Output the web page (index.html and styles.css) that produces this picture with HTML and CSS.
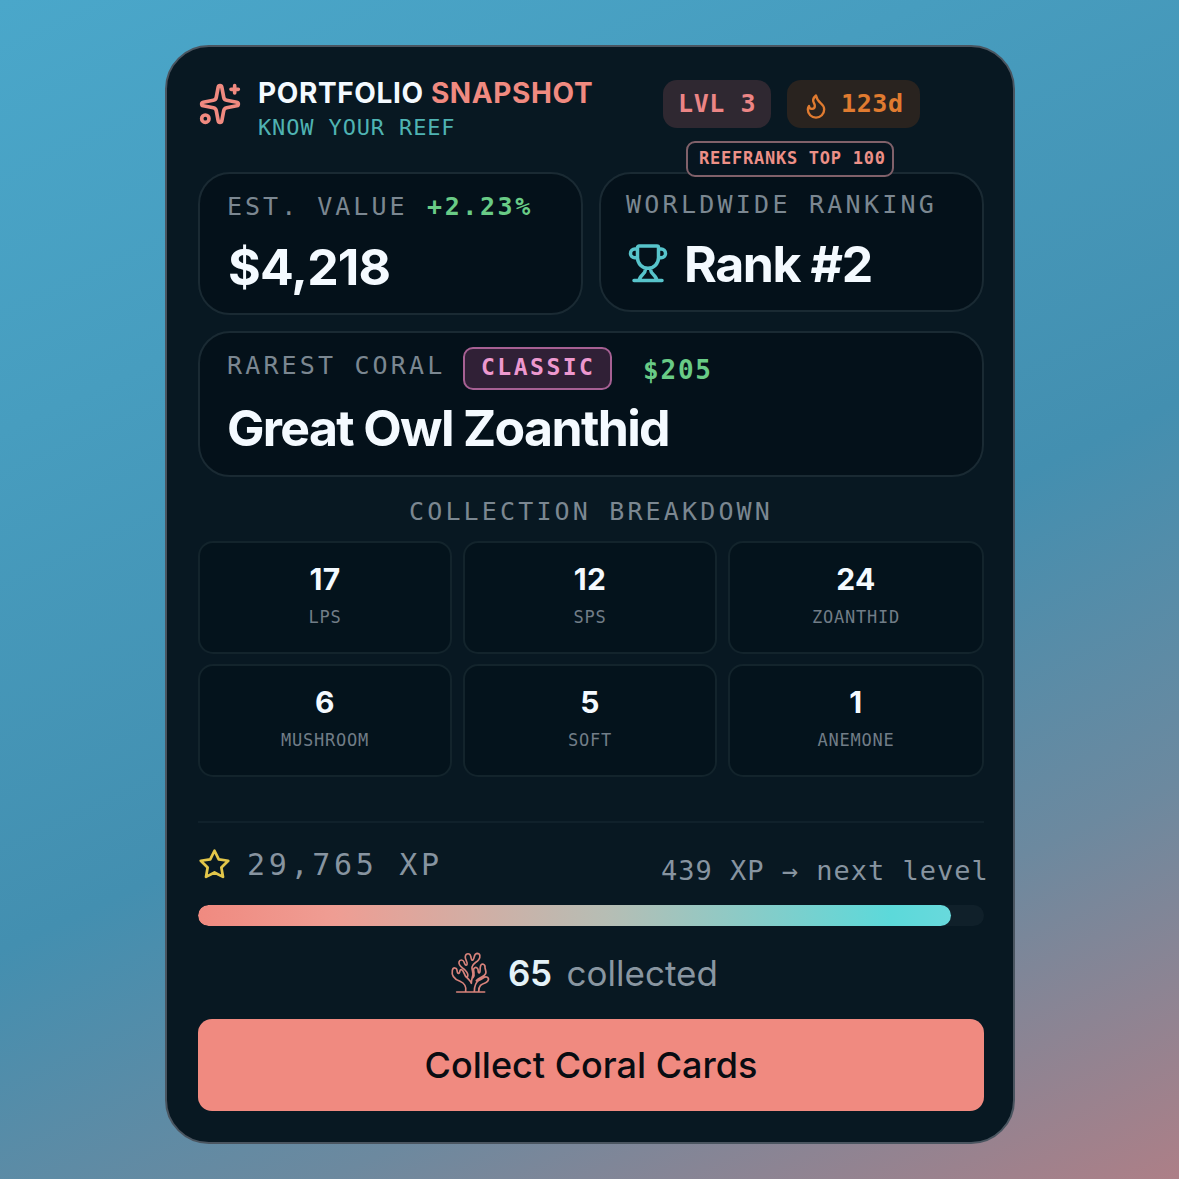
FILE: index.html
```html
<!DOCTYPE html>
<html lang="en">
<head>
<meta charset="utf-8">
<title>Portfolio Snapshot</title>
<link rel="stylesheet" href="styles.css">
</head>
<body>
<main class="card">
  <header class="header">
    <svg class="sparkles" viewBox="0 0 24 24"><path d="M11.017 2.814a1 1 0 0 1 1.966 0l1.051 5.558a2 2 0 0 0 1.594 1.594l5.558 1.051a1 1 0 0 1 0 1.966l-5.558 1.051a2 2 0 0 0-1.594 1.594l-1.051 5.558a1 1 0 0 1-1.966 0l-1.051-5.558a2 2 0 0 0-1.594-1.594l-5.558-1.051a1 1 0 0 1 0-1.966l5.558-1.051a2 2 0 0 0 1.594-1.594z"/><path d="M20 2v4M22 4h-4"/><circle cx="4" cy="20" r="2"/></svg>
    <div class="heading">
      <h1 class="title">PORTFOLIO <span class="accent">SNAPSHOT</span></h1>
      <p class="mono tagline">KNOW YOUR REEF</p>
    </div>
    <div class="badges">
      <span class="mono pill level">LVL 3</span>
      <span class="mono pill streak"><svg class="flame" viewBox="0 0 24 24"><path d="M8.500 14.500A2.500 2.500 0 0 0 11 12c0-1.380-.5-2-1-3-1.072-2.143-.224-4.054 2-6 .5 2.500 2 4.900 4 6.500 2 1.600 3 3.500 3 5.500a7 7 0 1 1-14 0c0-1.153.433-2.294 1-3a2.500 2.500 0 0 0 2.500 2.500z"/></svg><span>123d</span></span>
    </div>
  </header>

  <section class="stats">
    <article class="panel value">
      <div class="label-row"><span class="mono label est">EST. VALUE</span><span class="mono gain">+2.23%</span></div>
      <strong class="big price">$4,218</strong>
    </article>
    <article class="panel ranking">
      <span class="mono top-badge">REEFRANKS TOP 100</span>
      <span class="mono label world">WORLDWIDE RANKING</span>
      <div class="rank-row">
        <svg class="trophy" viewBox="0 0 24 24"><path d="M6 9H4.500a2.500 2.500 0 0 1 0-5H6M18 9h1.500a2.500 2.500 0 0 0 0-5H18M4 22h16M6 3.200v5.800a6 6 0 0 0 12 0V3.200a.9.9 0 0 0-.9-.9H6.900a.9.9 0 0 0-.9.9zM10.500 15v.8c0 2.600-3.500 3.200-3.500 6.200M13.500 15v.8c0 2.600 3.500 3.200 3.500 6.200"/></svg>
        <strong class="big rank">Rank #2</strong>
      </div>
    </article>
  </section>

  <section class="panel rarest">
    <div class="rarest-row"><span class="mono label rare">RAREST CORAL</span><span class="mono classic">CLASSIC</span><span class="mono rare-price">$205</span></div>
    <strong class="big coral-name">Great Owl Zoanthid</strong>
  </section>

  <h2 class="mono breakdown">COLLECTION BREAKDOWN</h2>
  <section class="grid">
    <div class="cell"><b>17</b><span class="mono">LPS</span></div>
    <div class="cell"><b>12</b><span class="mono">SPS</span></div>
    <div class="cell"><b>24</b><span class="mono">ZOANTHID</span></div>
    <div class="cell"><b>6</b><span class="mono">MUSHROOM</span></div>
    <div class="cell"><b>5</b><span class="mono">SOFT</span></div>
    <div class="cell"><b>1</b><span class="mono">ANEMONE</span></div>
  </section>

  <section class="progress">
    <div class="xp-row">
      <svg class="star" viewBox="0 0 24 24"><path d="M12 2l3.090 6.260L22 9.270l-5 4.870 1.180 6.880L12 17.770l-6.180 3.250L7 14.140 2 9.270l6.910-1.010z"/></svg>
      <span class="mono xp">29,765 XP</span>
      <span class="mono next">439 XP → next level</span>
    </div>
    <div class="track"><div class="fill" style="width: 95.8%"></div></div>
  </section>

  <div class="collected">
    <svg class="coral" viewBox="0 0 150 165"><path d="M35 141H119M62 140C65 122 58 115 45 109C29 103 19 91 22 76C24 66 35 67 36 76C37 82 38 87 42 85C46 82 43 72 50 74C58 77 56 92 66 98C72 91 68 83 60 75C50 66 40 62 42 51C44 43 54 43 57 51C59 57 62 63 66 59C70 53 58 43 61 33C63 24 75 24 77 33C79 40 79 48 84 45C89 40 86 26 96 25C106 25 107 36 101 44C94 53 82 56 81 66C80 76 86 82 83 93C81 101 79 107 79 115M88 140C88 121 91 113 101 106C115 103 115 94 125 96C134 99 131 109 122 113C109 118 101 121 101 140M66 98C72 104 77 109 79 115M84 98C90 91 87 85 86 77C84 68 93 64 98 71C101 76 98 83 102 84C108 83 103 72 107 62C110 53 121 58 120 67C120 75 125 77 122 86C118 95 103 97 94 107"/></svg>
    <b class="count">65</b><span class="collected-label">collected</span>
  </div>
  <button class="cta">Collect Coral Cards</button>
</main>
</body>
</html>
```
FILE: styles.css
```css
* { box-sizing: border-box; }
body {
  margin: 0;
  height: 1179px;
  overflow: hidden;
  padding: 45px 164px 0 165px;
  font-family: Inter, sans-serif;
  background: linear-gradient(155deg, #4aa7ca 0%, #479dbf 25%, #438fb0 55%, #6c899f 77%, #ad7f87 100%);
}
h1, h2, p { margin: 0; }
svg { fill: none; stroke: currentColor; stroke-width: 2; stroke-linecap: round; stroke-linejoin: round; flex: none; }
.mono { font-family: "DejaVu Sans Mono", monospace; white-space: pre; }
.card {
  display: flex;
  flex-direction: column;
  height: 1099px;
  padding: 0 29px 0 31px;
  border: 2px solid #4a5560;
  border-radius: 44px;
  background: #081822;
  color: #f4faff;
}
.header { display: flex; height: 125px; }
.sparkles { width: 44px; height: 44px; margin: 35px 16px 0 0; color: #f08a80; }
.heading { width: 405px; padding-top: 29px; }
.title { font-size: 28px; line-height: 34px; font-weight: 650; letter-spacing: .62px; white-space: nowrap; }
.accent { color: #f08a80; }
.tagline { color: #4fb3b3; font-size: 22px; line-height: 28px; margin-top: 4px; letter-spacing: .86px; }
.badges { display: flex; gap: 16px; padding-top: 33px; }
.pill { display: flex; align-items: center; height: 48px; border-radius: 14px; font-size: 25px; font-weight: 700; letter-spacing: .6px; padding-bottom: 1px; }
.level { width: 108px; padding-left: 15px; color: #ec8585; background: #2f2831; }
.streak { width: 133px; padding-left: 15px; gap: 11px; color: #e07b30; background: #29231f; }
.flame { width: 28px; height: 28px; margin-top: 4px; }
.stats { display: grid; grid-template-columns: 385px 385px; gap: 16px; height: 159px; align-items: start; }
.panel { border: 2px solid #1a2a33; border-radius: 32px; background: #04111a; }
.value { height: 143px; padding: 17px 28px; }
.label { font-size: 25px; line-height: 32px; letter-spacing: 3.25px; color: #7b8791; }
.label-row { display: flex; }
.est { width: 198px; margin-left: -1px; margin-right: 2px; letter-spacing: 3px; }
.gain { color: #69cb86; font-size: 25px; line-height: 32px; font-weight: 700; letter-spacing: 2.6px; }
.big { display: block; font-size: 50px; line-height: 60px; font-weight: 650; letter-spacing: -1.65px; white-space: nowrap; }
.price { margin-top: 14px; letter-spacing: -.8px; }
.ranking { position: relative; height: 140px; padding: 15px 25px; }
.top-badge {
  position: absolute; left: 85px; top: -33px; width: 208px; height: 36px; padding-left: 11px;
  border: 2px solid #80616a; border-radius: 9px; background: #061520; color: #ed9087;
  font-size: 17px; line-height: 31px; font-weight: 700; letter-spacing: .75px;
}
.world { display: block; }
.rank-row { display: flex; margin-top: 13px; }
.rank { letter-spacing: -1.4px; }
.trophy { width: 42px; height: 42px; margin: 8px 15px 0 1px; color: #57c4cb; }
.rarest { height: 146px; padding: 14px 27px; }
.rarest-row { display: flex; height: 43px; }
.rare { width: 236px; padding-top: 3px; letter-spacing: 3.15px; }
.classic { width: 149px; height: 43px; padding-left: 16px; border: 2px solid #a66093; border-radius: 10px; background: #302036; color: #ed98cf; font-size: 23px; line-height: 37px; font-weight: 700; letter-spacing: 2.5px; }
.rare-price { margin-left: 31px; padding-top: 7px; color: #69cb86; font-size: 26px; line-height: 32px; font-weight: 700; letter-spacing: 1.8px; }
.coral-name { margin-top: 8px; }
.breakdown { height: 64px; padding-top: 19px; text-align: center; font-size: 25px; line-height: 32px; font-weight: 400; letter-spacing: 3.15px; color: #7b8791; }
.grid { display: grid; grid-template-columns: 254px 254px 256px; grid-template-rows: 113px 113px; gap: 10px 11px; }
.cell { display: flex; flex-direction: column; align-items: center; padding-top: 17px; border: 2px solid #13242c; border-radius: 15px; background: #04131c; }
.cell b { font-size: 30px; line-height: 38px; font-weight: 650; letter-spacing: .4px; }
.cell span { margin-top: 8px; font-size: 17px; line-height: 22px; letter-spacing: .75px; color: #717d87; }
.progress { margin-top: 44px; border-top: 2px solid #10212b; height: 130px; }
.xp-row { display: flex; height: 82px; padding-top: 23px; }
.star { width: 33px; height: 33px; margin: 2px 16px 0 0; color: #e2c64a; }
.xp { width: 414px; flex: none; font-size: 30px; line-height: 38px; letter-spacing: 3.7px; color: #8794a0; }
.next { font-size: 27px; line-height: 38px; padding-top: 6px; letter-spacing: 1px; color: #8794a0; }
.track { height: 21px; border-radius: 11px; background: #10202a; overflow: hidden; }
.fill { height: 21px; border-radius: 11px; background: linear-gradient(90deg, #f08a80, #ef9d93 18%, #b5beb5 55%, #5cd9da 92%, #68d9dc); }
.collected { display: flex; height: 68px; padding-left: 247px; }
.coral { width: 50px; height: 55px; margin-top: -6px; color: #d7827b; stroke-width: 5; }
.count { margin-left: 13px; font-size: 35px; line-height: 44px; font-weight: 600; letter-spacing: -.4px; color: #e4f2f8; }
.collected-label { margin-left: 15px; font-size: 35px; line-height: 44px; color: #8996a1; }
.cta { width: 786px; height: 92px; padding: 0; border: 0; border-radius: 14px; background: #f08a80; color: #090c12; font: 500 36px/92px Inter, sans-serif; }
```
